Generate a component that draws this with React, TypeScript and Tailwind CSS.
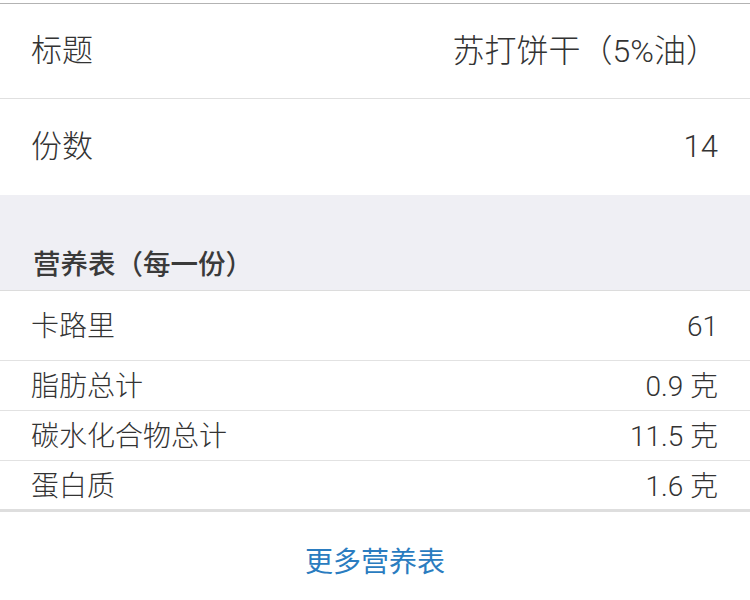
import React from "react";

const font = { fontFamily: 'Roboto, "Noto Sans CJK SC", sans-serif' };

function SmallRow({ label, value, last }: { label: string; value: string; last?: boolean }) {
  return (
    <div
      className={
        "flex items-center justify-between pl-[31px] pr-[32px] pt-[3px] " +
        (last ? "h-[51px] border-b-[3px] border-[#dedede]" : "h-[50px] border-b border-[#e2e2e2]")
      }
    >
      <span className="text-[28px] font-light text-[#333]">{label}</span>
      <span className="text-[28px] font-light text-[#333]">{value}</span>
    </div>
  );
}

export default function App() {
  return (
    <div className="w-[750px] h-[600px] bg-white overflow-hidden" style={font}>
      <div className="h-[3px] bg-white" />
      <div className="border-t border-[#b3b3b3]" />
      <div className="flex h-[95px] items-center justify-between pl-[31px] pr-[32px] border-b border-[#e0e0e0]">
        <span className="text-[31px] font-light text-[#333]">标题</span>
        <span className="text-[32px] font-light text-[#333]">苏打饼干（5%油）</span>
      </div>
      <div className="flex h-[96px] items-center justify-between pl-[31px] pr-[32px]">
        <span className="text-[31px] font-light text-[#333]">份数</span>
        <span className="text-[31px] font-light text-[#333]">14</span>
      </div>
      <div className="h-[96px] bg-[#efeff4] border-b border-[#dcdcdc] flex items-end pl-[33px] pb-[5px]">
        <span className="text-[27.5px] font-medium text-[#3a3a3a]">营养表（每一份）</span>
      </div>
      <div className="flex h-[70px] items-center justify-between pl-[31px] pr-[32px] pt-[3px] border-b border-[#e2e2e2]">
        <span className="text-[28px] font-light text-[#333]">卡路里</span>
        <span className="text-[28px] font-light text-[#333]">61</span>
      </div>
      <SmallRow label="脂肪总计" value="0.9 克" />
      <SmallRow label="碳水化合物总计" value="11.5 克" />
      <SmallRow label="蛋白质" value="1.6 克" last />
      <div className="flex h-[88px] items-center justify-center pt-[14px]">
        <span className="text-[28px] font-normal text-[#2a7cc0]">更多营养表</span>
      </div>
    </div>
  );
}
